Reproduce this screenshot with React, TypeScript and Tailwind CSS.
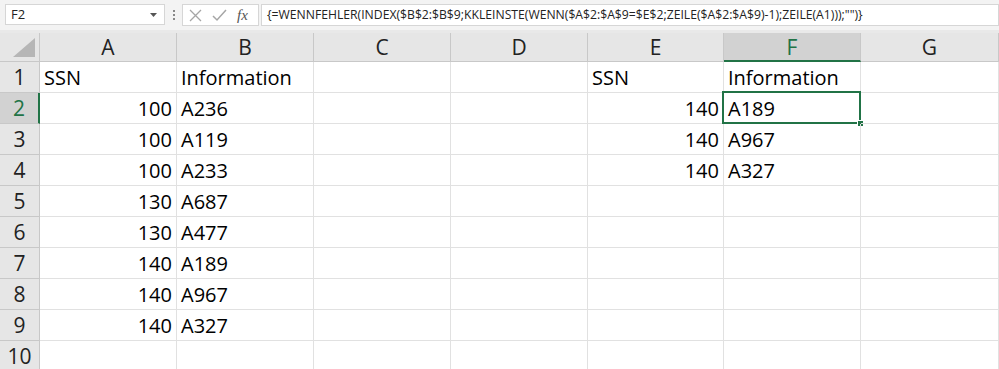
import React from "react";

const cols = ["A", "B", "C", "D", "E", "F", "G"];
const widths = ["w-[137px]", "w-[137px]", "w-[137px]", "w-[137px]", "w-[136px]", "w-[137px]", "w-[138px]"];

type Cell = { t: string; right?: boolean };
const data: Record<number, Record<string, Cell>> = {
  1: { A: { t: "SSN" }, B: { t: "Information" }, E: { t: "SSN" }, F: { t: "Information" } },
  2: { A: { t: "100", right: true }, B: { t: "A236" }, E: { t: "140", right: true }, F: { t: "A189" } },
  3: { A: { t: "100", right: true }, B: { t: "A119" }, E: { t: "140", right: true }, F: { t: "A967" } },
  4: { A: { t: "100", right: true }, B: { t: "A233" }, E: { t: "140", right: true }, F: { t: "A327" } },
  5: { A: { t: "130", right: true }, B: { t: "A687" } },
  6: { A: { t: "130", right: true }, B: { t: "A477" } },
  7: { A: { t: "140", right: true }, B: { t: "A189" } },
  8: { A: { t: "140", right: true }, B: { t: "A967" } },
  9: { A: { t: "140", right: true }, B: { t: "A327" } },
  10: {},
};

const cellFont = { fontFamily: "'Open Sans', 'Noto Sans', sans-serif" };

export default function App() {
  const rows = [1, 2, 3, 4, 5, 6, 7, 8, 9, 10];
  return (
    <div className="w-[999px] h-[369px] overflow-hidden bg-white" style={cellFont}>
      {/* formula bar */}
      <div className="h-[30px] bg-[#f3f3f3] flex items-start pt-[4px]">
        <div className="ml-[5px] w-[160px] h-[21px] bg-white border border-[#d6d6d6] flex items-center justify-between pl-[5px] pr-[7px]">
          <span className="text-[13px] text-[#222] leading-none">F2</span>
          <svg width="7" height="4" viewBox="0 0 7 4"><path d="M0 0 L7 0 L3.5 4 Z" fill="#555" /></svg>
        </div>
        <div className="w-[17px] h-[21px] flex flex-col items-center justify-center gap-[2px]">
          <span className="w-[2px] h-[2px] bg-[#888]" />
          <span className="w-[2px] h-[2px] bg-[#888]" />
          <span className="w-[2px] h-[2px] bg-[#888]" />
        </div>
        <div className="w-[77px] h-[22px] bg-white border border-[#d6d6d6] flex items-center pl-[6px] gap-[10px]">
          <svg width="13" height="13" viewBox="0 0 13 13"><path d="M1 1 L12 12 M12 1 L1 12" stroke="#a6a6a6" strokeWidth="1.3" /></svg>
          <svg width="15" height="13" viewBox="0 0 15 13"><path d="M1 7 L5 11 L14 1" stroke="#a6a6a6" strokeWidth="1.5" fill="none" /></svg>
          <span className="text-[15px] italic text-[#555] leading-none" style={{ fontFamily: "'Liberation Serif', serif" }}>fx</span>
        </div>
        <div className="ml-[2px] flex-1 h-[22px] bg-white border border-[#d6d6d6] flex items-center pl-[5px]">
          <span className="text-[12.2px] text-[#222] whitespace-nowrap leading-none">
            {'{=WENNFEHLER(INDEX($B$2:$B$9;KKLEINSTE(WENN($A$2:$A$9=$E$2;ZEILE($A$2:$A$9)-1);ZEILE(A1)));"")}'}
          </span>
        </div>
      </div>
      <div className="h-[3px] bg-[#e9e9e9]" />
      {/* column headers */}
      <div className="flex h-[29px]">
        <div className="w-[40px] bg-[#e6e6e6] border-r border-b border-[#c8c8c8] relative">
          <svg className="absolute right-[4px] bottom-[4px]" width="22" height="19" viewBox="0 0 22 19"><path d="M22 0 L22 19 L0 19 Z" fill="#b6b6b6" /></svg>
        </div>
        {cols.map((c, i) => {
          const sel = c === "F";
          return (
            <div
              key={c}
              className={`${widths[i]} flex items-center justify-center pt-[2px] text-[21px] border-r ${
                sel
                  ? "bg-[#d2d2d2] text-[#217346] border-b-2 border-b-[#217346] border-r-[#c8c8c8]"
                  : "bg-[#e6e6e6] text-[#222] border-b border-[#c8c8c8]"
              }`}
            >
              {c}
            </div>
          );
        })}
      </div>
      {/* rows */}
      {rows.map((r) => {
        const rowSel = r === 2;
        return (
          <div key={r} className="flex h-[31px]">
            <div
              className={`w-[40px] flex items-center justify-center pt-[2px] text-[21px] border-b ${
                rowSel
                  ? "bg-[#d2d2d2] text-[#217346] border-r-2 border-r-[#217346] border-b-[#c8c8c8]"
                  : "bg-[#e6e6e6] text-[#222] border-r border-[#c8c8c8]"
              }`}
            >
              {r}
            </div>
            {cols.map((c, i) => {
              const cell = data[r][c];
              const selected = r === 2 && c === "F";
              return (
                <div
                  key={c}
                  className={`${widths[i]} relative border-r border-b border-[#e1e1e1] flex items-center pt-[2px] text-[20px] text-black px-[4px] ${
                    cell?.right ? "justify-end" : "justify-start"
                  }`}
                >
                  {cell?.t}
                  {selected && (
                    <>
                      <div className="absolute left-[-2px] top-[-2px] right-[-1px] bottom-[-1px] border-2 border-[#217346]" />
                      <div className="absolute right-[-4px] bottom-[-4px] w-[7px] h-[7px] bg-[#217346] border border-white" />
                    </>
                  )}
                </div>
              );
            })}
          </div>
        );
      })}
    </div>
  );
}
